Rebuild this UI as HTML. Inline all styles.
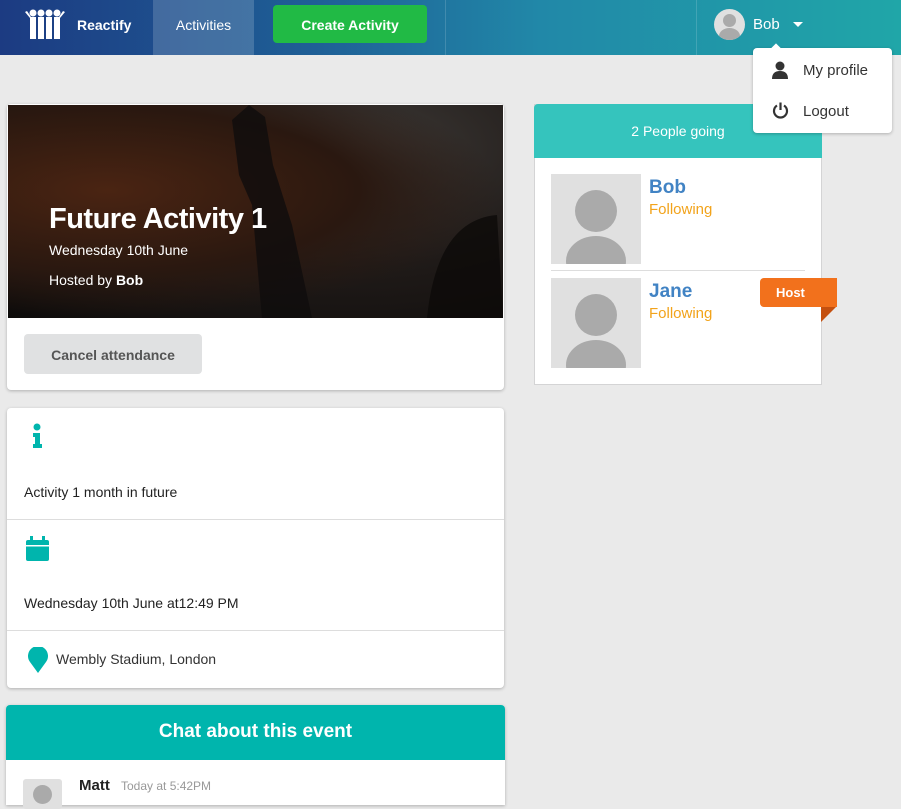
<!DOCTYPE html>
<html><head><meta charset="utf-8"><style>
*{box-sizing:border-box;margin:0;padding:0}
body{width:901px;height:798px;overflow:hidden;background:#eaeaea;font-family:"Liberation Sans",sans-serif;position:relative;color:#222}
.abs{position:absolute}
.nav{left:0;top:0;width:901px;height:55px;background:linear-gradient(90deg,#1c3b82 0%,#1f5f96 35%,#2188a8 60%,#20a6a8 100%)}
.card{background:#fff;border-radius:4px;box-shadow:0 1px 3px rgba(0,0,0,.25)}
.av{background:#e0e0e0;overflow:hidden}
</style></head><body>
<div class="abs nav"></div>
<svg class="abs" style="left:25px;top:9px" width="42" height="30" viewBox="0 0 42 30" fill="#fff">
<circle cx="8" cy="4" r="3.5"/><circle cx="16" cy="4" r="3.5"/><circle cx="24" cy="4" r="3.5"/><circle cx="32" cy="4" r="3.5"/>
<rect x="5" y="8" width="6" height="22"/><rect x="13" y="8" width="6" height="22"/><rect x="21" y="8" width="6" height="22"/><rect x="29" y="8" width="6" height="22"/>
<path d="M5 9 L0 3 L2 2 L6 8Z M35 9 L40 3 L38 2 L34 8Z"/></svg>
<div class="abs" style="left:77px;top:17px;color:#fff;font-weight:bold;font-size:14px">Reactify</div>
<div class="abs" style="left:153px;top:0;width:101px;height:55px;background:rgba(255,255,255,.17);color:#fff;font-size:14px;text-align:center;line-height:51px">Activities</div>
<div class="abs" style="left:273px;top:5px;width:154px;height:38px;background:#21ba45;border-radius:4px;color:#fff;font-weight:bold;font-size:14px;text-align:center;line-height:40px">Create Activity</div>
<div class="abs" style="left:445px;top:0;width:1px;height:55px;background:rgba(255,255,255,.15)"></div>
<div class="abs" style="left:696px;top:0;width:1px;height:55px;background:rgba(255,255,255,.15)"></div>
<div class="abs av" style="left:714px;top:9px;width:31px;height:31px;border-radius:50%"><div class="abs" style="left:9px;top:5px;width:13px;height:13px;border-radius:50%;background:#aaa"></div><div class="abs" style="left:5px;top:19px;width:21px;height:16px;border-radius:50%;background:#aaa"></div></div>
<div class="abs" style="left:753px;top:16px;color:#fff;font-size:15px">Bob</div>
<div class="abs" style="left:793px;top:22px;border:5px solid transparent;border-top-color:#fff"></div>

<div class="abs card" style="left:7px;top:104px;width:497px;height:286px;overflow:hidden">
<div class="abs" style="left:1px;top:1px;width:495px;height:213px;background:radial-gradient(ellipse at 20% 40%,#4a2412 0%,#2a1810 45%,transparent 70%),radial-gradient(ellipse at 70% 20%,#3e3a37 0%,#1f1a18 50%,#0d0b0a 100%)"></div>
<svg class="abs" style="left:200px;top:1px" width="300" height="213"><path d="M25 15 L42 0 L58 12 L66 60 L85 120 L105 213 L55 213 L45 100 L32 70Z" fill="#0f0d0c" opacity=".8"/><path d="M220 213 Q230 115 290 110 L296 213Z" fill="#0c0a09" opacity=".8"/></svg>
<div class="abs" style="left:42px;top:99px;color:#fff;font-weight:bold;font-size:29px;letter-spacing:-0.5px">Future Activity 1</div>
<div class="abs" style="left:42px;top:138px;color:#fff;font-size:14px">Wednesday 10th June</div>
<div class="abs" style="left:42px;top:168px;color:#fff;font-size:14px">Hosted by <b>Bob</b></div>
<div class="abs" style="left:17px;top:230px;width:178px;height:40px;background:#e0e1e2;border-radius:4px;color:#555;font-weight:bold;font-size:14px;text-align:center;line-height:42px">Cancel attendance</div>
</div>

<div class="abs card" style="left:7px;top:408px;width:497px;height:280px">
<div class="abs" style="left:0;top:111px;width:497px;height:1px;background:#ddd"></div>
<div class="abs" style="left:0;top:222px;width:497px;height:1px;background:#ddd"></div>
<svg class="abs" style="left:25px;top:15px" width="12" height="25" viewBox="0 0 12 25" fill="#00b5ad"><circle cx="5" cy="4" r="3.5"/><path d="M1 10 H8 V21 H10 V25 H1 V21 H3 V14 H1Z"/></svg>
<div class="abs" style="left:17px;top:76px;font-size:14px">Activity 1 month in future</div>
<svg class="abs" style="left:19px;top:128px" width="23" height="25" viewBox="0 0 23 25" fill="#00b5ad"><rect x="0" y="4" width="23" height="21" rx="2"/><rect x="4" y="0" width="3" height="5"/><rect x="16" y="0" width="3" height="5"/><rect x="0" y="9" width="23" height="1.5" fill="#fff"/></svg>
<div class="abs" style="left:17px;top:187px;font-size:14px">Wednesday 10th June at12:49 PM</div>
<svg class="abs" style="left:21px;top:239px" width="20" height="26" viewBox="0 0 20 26" fill="#00b5ad"><path d="M10 26 L2 15 A10 10 0 1 1 18 15Z"/></svg>
<div class="abs" style="left:49px;top:243px;font-size:14px;color:#333">Wembly Stadium, London</div>
</div>

<div class="abs" style="left:6px;top:705px;width:499px;height:100px;background:#fff;border-radius:4px 4px 0 0;box-shadow:0 1px 3px rgba(0,0,0,.25)"></div>
<div class="abs" style="left:6px;top:705px;width:499px;height:55px;background:#00b5ad;border-radius:4px 4px 0 0;color:#fff;font-weight:bold;font-size:19px;text-align:center;line-height:54px">Chat about this event</div>
<div class="abs av" style="left:23px;top:779px;width:39px;height:30px;border-radius:3px"><div class="abs" style="left:10px;top:6px;width:19px;height:19px;border-radius:50%;background:#aaa"></div></div>
<div class="abs" style="left:79px;top:777px;font-weight:bold;font-size:15px">Matt</div>
<div class="abs" style="left:121px;top:779px;font-size:12px;color:#999">Today at 5:42PM</div>

<div class="abs" style="left:534px;top:104px;width:288px;height:281px;background:#fff;border:1px solid #d4d4d5"></div>
<div class="abs" style="left:534px;top:104px;width:288px;height:54px;background:#35c4bd;border-radius:4px 4px 0 0;color:#fff;font-size:14px;text-align:center;line-height:54px">2 People going</div>
<div class="abs av" style="left:551px;top:174px;width:90px;height:90px"><div class="abs" style="left:24px;top:16px;width:42px;height:42px;border-radius:50%;background:#aaa"></div><div class="abs" style="left:15px;top:62px;width:60px;height:50px;border-radius:50%;background:#aaa"></div></div>
<div class="abs" style="left:649px;top:177px;font-weight:bold;font-size:19px;color:#4183c4">Bob</div>
<div class="abs" style="left:649px;top:201px;font-size:15px;color:#f2a31b">Following</div>
<div class="abs" style="left:551px;top:270px;width:254px;height:1px;background:#ddd"></div>
<div class="abs av" style="left:551px;top:278px;width:90px;height:90px"><div class="abs" style="left:24px;top:16px;width:42px;height:42px;border-radius:50%;background:#aaa"></div><div class="abs" style="left:15px;top:62px;width:60px;height:50px;border-radius:50%;background:#aaa"></div></div>
<div class="abs" style="left:649px;top:281px;font-weight:bold;font-size:19px;color:#4183c4">Jane</div>
<div class="abs" style="left:649px;top:305px;font-size:15px;color:#f2a31b">Following</div>
<div class="abs" style="left:821px;top:306px;border-top:16px solid #c4500f;border-right:16px solid transparent"></div>
<div class="abs" style="left:760px;top:278px;width:77px;height:29px;background:#f2711c;border-radius:4px 0 0 4px;color:#fff;font-weight:bold;font-size:13px;line-height:29px;padding-left:16px">Host</div>

<div class="abs card" style="left:753px;top:48px;width:139px;height:85px"></div>
<div class="abs" style="left:772px;top:45px;width:8px;height:8px;background:#fff;transform:rotate(45deg)"></div>
<svg class="abs" style="left:772px;top:61px" width="16" height="18" viewBox="0 0 16 18" fill="#333"><circle cx="8" cy="5" r="4.5"/><path d="M0 18 Q0 10 8 10 Q16 10 16 18Z"/></svg>
<div class="abs" style="left:803px;top:62px;font-size:15px;color:#333">My profile</div>
<svg class="abs" style="left:772px;top:102px" width="17" height="17" viewBox="0 0 17 17" fill="none" stroke="#333" stroke-width="2.2"><path d="M5 3.5 A6.5 6.5 0 1 0 12 3.5"/><path d="M8.5 0.5 V8"/></svg>
<div class="abs" style="left:803px;top:103px;font-size:15px;color:#333">Logout</div>
</body></html>
